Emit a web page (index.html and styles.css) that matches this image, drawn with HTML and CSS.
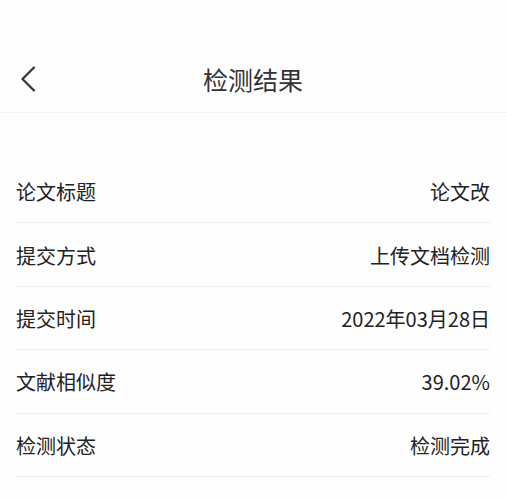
FILE: index.html
```html
<!DOCTYPE html>
<html lang="zh-CN">
<head>
<meta charset="utf-8">
<link rel="stylesheet" href="styles.css">
</head>
<body>
<div class="page">
  <header class="nav">
    <span class="back">
      <svg width="16" height="26" viewBox="0 0 16 26"><path d="M14 1.5 L2.5 13 L14 24.5" fill="none" stroke="#333" stroke-width="2.2" stroke-linecap="round" stroke-linejoin="round"/></svg>
    </span>
    <h1 class="title">检测结果</h1>
  </header>
  <ul class="list">
    <li class="row"><span class="label">论文标题</span><span class="value">论文改</span></li>
    <li class="row"><span class="label">提交方式</span><span class="value">上传文档检测</span></li>
    <li class="row"><span class="label">提交时间</span><span class="value">2022年03月28日</span></li>
    <li class="row"><span class="label">文献相似度</span><span class="value">39.02%</span></li>
    <li class="row"><span class="label">检测状态</span><span class="value">检测完成</span></li>
  </ul>
</div>
</body>
</html>
```

FILE: styles.css
```css
* { box-sizing: border-box; }
html, body {
  margin: 0;
  padding: 0;
  background: #fefefe;
}
body {
  font-family: "Noto Sans CJK SC", "Noto Sans", sans-serif;
  color: #222;
}
.page {
  width: 506px;
  height: 500px;
  overflow: hidden;
}
.nav {
  position: relative;
  height: 113px;
  padding-top: 48px;
  border-bottom: 1px solid #f3f3f3;
  display: flex;
  align-items: center;
  justify-content: center;
}
.back {
  position: absolute;
  left: 20px;
  top: 66px;
  display: flex;
}
.title {
  margin: 0;
  font-size: 25px;
  font-weight: 400;
  color: #333;
  line-height: 1;
  padding-bottom: 2px;
}
.list {
  list-style: none;
  margin: 47px 16px 0;
  padding: 0;
}
.row {
  height: 63.4px;
  display: flex;
  align-items: center;
  justify-content: space-between;
  border-bottom: 1px solid #eeeeee;
  font-size: 20px;
  line-height: 1;
  padding-top: 2px;
}
.label, .value { color: #222; }
```
